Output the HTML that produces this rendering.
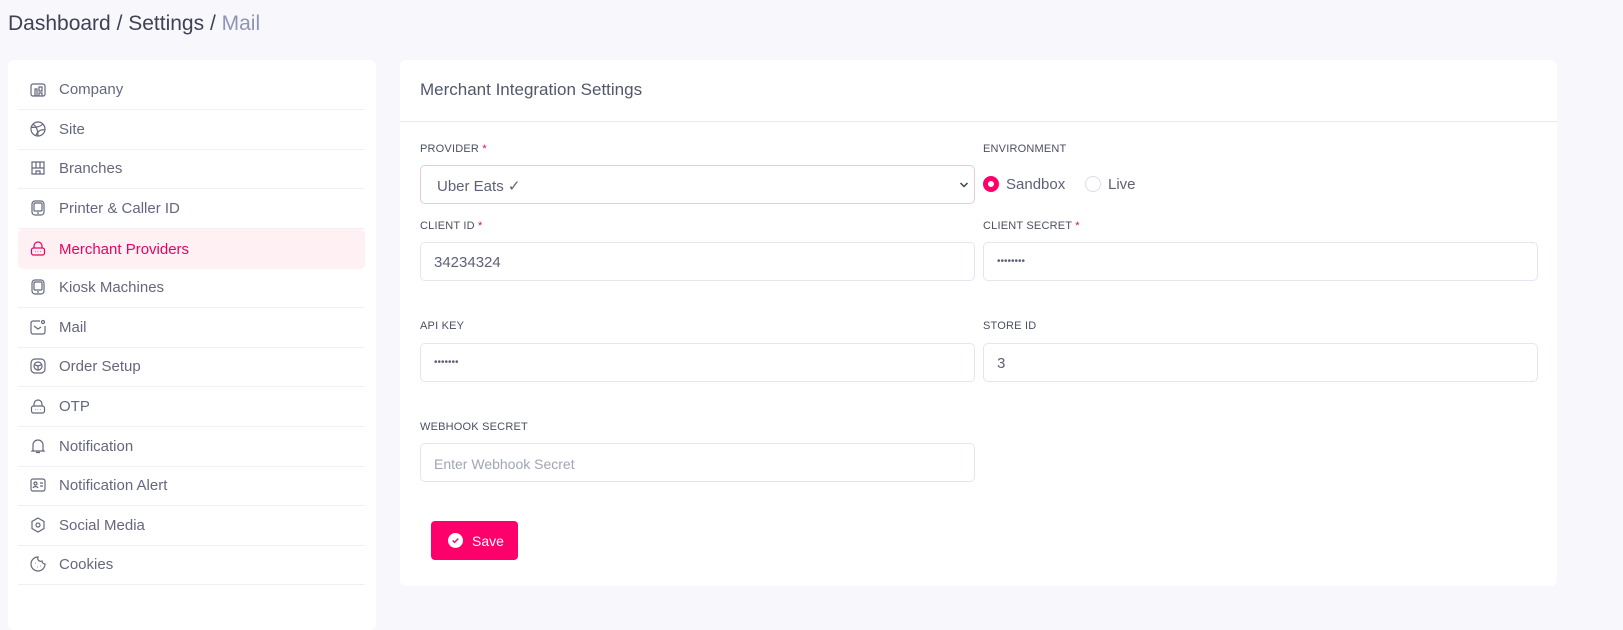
<!DOCTYPE html>
<html><head><meta charset="utf-8"><style>
*{box-sizing:border-box;margin:0;padding:0}
body{width:1623px;height:618px;background:#f7f7fc;font-family:"Liberation Sans",sans-serif;position:relative;overflow:hidden;color:#5e6178}
.abs{position:absolute}
.bc{left:8px;top:12px;font-size:21px;color:#3f4254}
.bc span{color:#8f95b2}
.side{left:8px;top:60px;width:368px;height:570px;background:#fff;border-radius:6px}
.item{position:absolute;left:18px;width:347px;height:40px;font-size:15px;color:#64677e;display:flex;align-items:center;padding-left:41px;border-bottom:1px solid #f0f0f4}
.item svg{position:absolute;left:12px;top:11px}
.item.act{background:#fff0f4;color:#e8035f;border-radius:5px;border-bottom:none}
.card{left:400px;top:60px;width:1157px;height:526px;background:#fff;border-radius:6px}
.hd{position:absolute;left:0;top:0;width:100%;height:62px;border-bottom:1px solid #e8e8ef;font-size:17px;color:#53576c;padding:20px 20px}
.lbl{position:absolute;font-size:11px;color:#4b4f63;letter-spacing:.2px}
.lbl b{color:#e8035f;font-weight:normal}
.inp{position:absolute;width:555px;height:39px;border:1px solid #e4e6ef;border-radius:5px;font-size:15px;color:#5e6178;padding:11px 13px}
.btn{left:431px;top:521px;width:87px;height:39px;background:#fe006b;border-radius:4px;color:#fff;font-size:14px;display:flex;align-items:center;padding-left:17px}
</style></head><body>
<div class="abs bc">Dashboard / Settings / <span>Mail</span></div>
<div class="abs side"></div>
<div class="item" style="top:70px"><svg width="16" height="16" viewBox="0 0 16 16" fill="none" stroke="#64677e" stroke-width="1.2"><rect x="1" y="3" width="14" height="12" rx="2"/><path d="M5 15V8h2v7M9 6h3v4H9zM9 15v-3h3v3"/></svg>Company</div>
<div class="item" style="top:110px"><svg width="16" height="16" viewBox="0 0 16 16" fill="none" stroke="#64677e" stroke-width="1.2"><circle cx="8" cy="8" r="7"/><path d="M3 3c3 2 5 6 5 12M13 3c-3 3-9 4-12 3M15 9c-4-1-7 1-9 5"/></svg>Site</div>
<div class="item" style="top:149px"><svg width="16" height="16" viewBox="0 0 16 16" fill="none" stroke="#64677e" stroke-width="1.2"><path d="M2 2h12v6H2zM2 8v6h12V8M6 14v-3h4v3M6 2v6M10 2v6"/></svg>Branches</div>
<div class="item" style="top:189px"><svg width="16" height="16" viewBox="0 0 16 16" fill="none" stroke="#64677e" stroke-width="1.2"><rect x="2" y="1" width="12" height="14" rx="3"/><rect x="4" y="3" width="8" height="8" rx="1"/><path d="M7 13h2"/></svg>Printer &amp; Caller ID</div>
<div class="item act" style="top:229px"><svg width="16" height="16" viewBox="0 0 16 16" fill="none" stroke="#e8035f" stroke-width="1.2"><path d="M4 8V6a4 4 0 0 1 8 0v2"/><rect x="1.5" y="8" width="13" height="7" rx="2"/><path d="M5 11.5h.5M7.7 11.5h.5M10.5 11.5h.5"/></svg>Merchant Providers</div>
<div class="item" style="top:268px"><svg width="16" height="16" viewBox="0 0 16 16" fill="none" stroke="#64677e" stroke-width="1.2"><rect x="2" y="1" width="12" height="14" rx="3"/><rect x="4" y="3" width="8" height="8" rx="1"/><path d="M7 13h2"/></svg>Kiosk Machines</div>
<div class="item" style="top:308px"><svg width="16" height="16" viewBox="0 0 16 16" fill="none" stroke="#64677e" stroke-width="1.2"><path d="M10 2H3a2 2 0 0 0-2 2v9a2 2 0 0 0 2 2h10a2 2 0 0 0 2-2V7"/><path d="M4 7l4 3 3-2"/><circle cx="13" cy="3" r="1.5"/></svg>Mail</div>
<div class="item" style="top:347px"><svg width="16" height="16" viewBox="0 0 16 16" fill="none" stroke="#64677e" stroke-width="1.2"><rect x="1" y="1" width="14" height="14" rx="4"/><circle cx="8" cy="8" r="4"/><path d="M5 7l3 1 3-1M8 8v4"/></svg>Order Setup</div>
<div class="item" style="top:387px"><svg width="16" height="16" viewBox="0 0 16 16" fill="none" stroke="#64677e" stroke-width="1.2"><path d="M4 8V6a4 4 0 0 1 8 0v2"/><rect x="1.5" y="8" width="13" height="7" rx="2"/><path d="M5 11.5h.5M7.7 11.5h.5M10.5 11.5h.5"/></svg>OTP</div>
<div class="item" style="top:427px"><svg width="16" height="16" viewBox="0 0 16 16" fill="none" stroke="#64677e" stroke-width="1.2"><path d="M3 12V7a5 5 0 0 1 10 0v5l1 1H2zM6 14.5h4"/></svg>Notification</div>
<div class="item" style="top:466px"><svg width="16" height="16" viewBox="0 0 16 16" fill="none" stroke="#64677e" stroke-width="1.2"><rect x="1" y="2" width="14" height="12" rx="2"/><circle cx="5.5" cy="6.5" r="1.5"/><path d="M3 11c1-2 4-2 5 0M10 6h3M10 9h3"/></svg>Notification Alert</div>
<div class="item" style="top:506px"><svg width="16" height="16" viewBox="0 0 16 16" fill="none" stroke="#64677e" stroke-width="1.2"><path d="M8 1l6 3.5v7L8 15l-6-3.5v-7z"/><circle cx="8" cy="8" r="2"/></svg>Social Media</div>
<div class="item" style="top:545px"><svg width="16" height="16" viewBox="0 0 16 16" fill="none" stroke="#64677e" stroke-width="1.2"><path d="M8 1a7 7 0 1 0 7 7 3 3 0 0 1-3-3 3 3 0 0 1-4-4z"/><path d="M5 7h.5M7 11h.5M10 10h.5"/></svg>Cookies</div>

<div class="abs card"><div class="hd">Merchant Integration Settings</div></div>
<div class="lbl" style="left:420px;top:143px">PROVIDER <b>*</b></div>
<div class="inp" style="left:420px;top:165px;border-color:#e8cbd5;padding-left:16px">Uber Eats ✓<svg style="position:absolute;right:5px;top:15px" width="10" height="8" viewBox="0 0 10 8"><path d="M1.5 2l3.5 3.5L8.5 2" stroke="#3f4254" stroke-width="1.5" fill="none"/></svg></div>
<div class="lbl" style="left:983px;top:143px">ENVIRONMENT</div>
<div class="abs" style="left:983px;top:176px;width:16px;height:16px;border-radius:50%;border:5px solid #fe006b;background:#fff"></div>
<div class="abs" style="left:1006px;top:176px;font-size:15px">Sandbox</div>
<div class="abs" style="left:1085px;top:176px;width:16px;height:16px;border-radius:50%;border:1px solid #dcdde6"></div>
<div class="abs" style="left:1108px;top:176px;font-size:15px">Live</div>
<div class="lbl" style="left:420px;top:220px">CLIENT ID <b>*</b></div>
<div class="inp" style="left:420px;top:242px">34234324</div>
<div class="lbl" style="left:983px;top:220px">CLIENT SECRET <b>*</b></div>
<div class="inp" style="left:983px;top:242px;font-size:10px;padding-top:13px">••••••••</div>
<div class="lbl" style="left:420px;top:320px">API KEY</div>
<div class="inp" style="left:420px;top:343px;font-size:10px;padding-top:13px">•••••••</div>
<div class="lbl" style="left:983px;top:320px">STORE ID</div>
<div class="inp" style="left:983px;top:343px">3</div>
<div class="lbl" style="left:420px;top:421px">WEBHOOK SECRET</div>
<div class="inp" style="left:420px;top:443px;font-size:14px;color:#a1a5b7;padding-top:12px">Enter Webhook Secret</div>
<div class="abs btn"><svg width="15" height="15" viewBox="0 0 16 16" style="margin-right:9px"><circle cx="8" cy="8" r="8" fill="#fff"/><path d="M5 8l2 2 4-4" stroke="#fe006b" stroke-width="1.5" fill="none"/></svg>Save</div>
</body></html>
